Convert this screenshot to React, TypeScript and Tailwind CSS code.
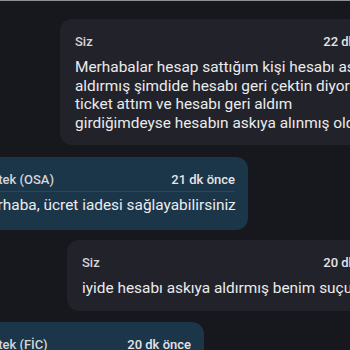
const font = { fontFamily: 'Roboto, "Noto Sans", sans-serif' }

function Header({ name, time }: { name: string; time: string }) {
  return (
    <div className="flex items-center justify-between pb-[2px] text-[13px] leading-[18px]">
      <span className="font-medium text-[#d4d5d9]">{name}</span>
      <span className="font-medium text-[#e4e5e8]">{time}</span>
    </div>
  )
}

function UserBubble({
  className,
  time,
  lines,
}: {
  className: string
  time: string
  lines: string[]
}) {
  return (
    <div
      className={`overflow-hidden rounded-xl bg-[#22232a] px-[15px] pt-[14px] pb-[13px] ${className}`}
    >
      <Header name="Siz" time={time} />
      <div className="border-t border-[#22232a] pt-[4px] text-[15.4px] leading-[18.6px] whitespace-nowrap text-[#ebebed]">
        {lines.map((l) => (
          <div key={l}>{l}</div>
        ))}
      </div>
    </div>
  )
}

function SupportBubble({
  className,
  name,
  time,
  text,
}: {
  className: string
  name: string
  time: string
  text: string
}) {
  return (
    <div
      className={`overflow-hidden rounded-xl bg-[#1b3549] pt-[14px] pr-[13px] pb-[15px] pl-[15px] ${className}`}
    >
      <Header name={name} time={time} />
      <div className="border-t border-[#2a4659] pt-[4px] text-[15.4px] leading-[18.6px] whitespace-nowrap text-[#ebedef]">
        {text}
      </div>
    </div>
  )
}

export default function App() {
  return (
    <div
      className="h-[350px] w-[350px] overflow-hidden bg-[#17181d]"
      style={font}
    >
      <div className="h-px bg-[#8e9096]" />
      <div className="-ml-[39px] flex w-[441px] flex-col pt-[18px]">
        <UserBubble
          className="ml-[99px]"
          time="22 dk önce"
          lines={[
            'Merhabalar hesap sattığım kişi hesabı askıya',
            'aldırmış şimdide hesabı geri çektin diyor ben',
            'ticket attım ve hesabı geri aldım',
            'girdiğimdeyse hesabın askıya alınmış olduğunu',
          ]}
        />
        <SupportBubble
          className="mt-[12px] w-[287px]"
          name="Destek (OSA)"
          time="21 dk önce"
          text="Merhaba, ücret iadesi sağlayabilirsiniz"
        />
        <UserBubble
          className="mt-[10px] ml-[106px]"
          time="20 dk önce"
          lines={['iyide hesabı askıya aldırmış benim suçum ne']}
        />
        <SupportBubble
          className="mt-[11px] w-[243px]"
          name="Destek (FİC)"
          time="20 dk önce"
          text="Merhaba, hesabınız incelenmektedir"
        />
      </div>
    </div>
  )
}
